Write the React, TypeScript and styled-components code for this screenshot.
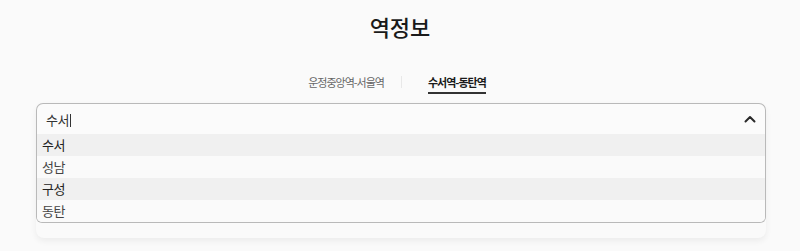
import React, { useState } from 'react';
import styled, { createGlobalStyle } from 'styled-components';

const GlobalStyle = createGlobalStyle`
  html, body {
    margin: 0;
    padding: 0;
    background: #fafafa;
    font-family: "Noto Sans CJK KR", "Noto Sans", sans-serif;
    color: #222;
  }
`;

const Page = styled.div`
  width: 800px;
  height: 251px;
  overflow: hidden;
  display: flex;
  flex-direction: column;
  align-items: center;
`;

const Title = styled.h1`
  margin: 10px 0 0;
  font-size: 22px;
  line-height: 32px;
  font-weight: 500;
  color: #1a1a1a;
`;

const Tabs = styled.div`
  display: flex;
  align-items: center;
  margin: 32px 6px 0 0;
`;

const Tab = styled.button<{ $active: boolean }>`
  border: 0;
  background: none;
  padding: 0 0 2px;
  font-family: inherit;
  font-size: 11px;
  letter-spacing: -1px;
  line-height: 16px;
  font-weight: ${p => (p.$active ? 700 : 400)};
  color: ${p => (p.$active ? '#1a1a1a' : '#666')};
  border-bottom: 2px solid ${p => (p.$active ? '#333' : 'transparent')};
  cursor: pointer;
`;

const Divider = styled.span`
  width: 1px;
  height: 12px;
  margin: 0 26px 4px 17px;
  background: #e8e8e8;
`;

const Content = styled.div`
  align-self: stretch;
  padding: 0 34px 0 36px;
  margin-top: 9px;
`;

const Card = styled.div`
  position: relative;
  height: 135px;
  border-radius: 8px;
  background: #fafafa;
  box-shadow: 0 3px 6px rgba(0, 0, 0, 0.06);
`;

const SelectBox = styled.div<{ $open: boolean }>`
  position: relative;
  display: flex;
  align-items: center;
  justify-content: space-between;
  height: 30px;
  padding: 0 9px;
  border: 1px solid #b9b9b9;
  border-bottom-color: ${p => (p.$open ? '#d4d4d4' : '#b9b9b9')};
  border-radius: ${p => (p.$open ? '7px 7px 0 0' : '7px')};
  background: #fbfbfb;
  font-size: 13px;
  letter-spacing: -0.5px;
  color: #333;
  cursor: pointer;
`;

const Caret = styled.span`
  display: inline-block;
  width: 1px;
  height: 13px;
  margin-left: 1px;
  background: #333;
  vertical-align: -2px;
`;

const Menu = styled.ul`
  position: absolute;
  top: 31px;
  left: 0;
  right: 0;
  margin: 0;
  padding: 0;
  list-style: none;
  border: 1px solid #b9b9b9;
  border-top: 0;
  border-radius: 0 0 6px 6px;
  background: #fafafa;
  overflow: hidden;
`;

const Option = styled.li<{ $shade: boolean }>`
  height: 22px;
  line-height: 22px;
  padding-left: 5px;
  font-size: 13px;
  letter-spacing: -0.5px;
  color: ${p => (p.$shade ? '#222' : '#444')};
  background: ${p => (p.$shade ? '#f0f0f0' : '#fafafa')};
`;

const Chevron = () => (
  <svg width="12" height="8" viewBox="0 0 12 8" fill="none">
    <path d="M1.5 6.5L6 2l4.5 4.5" stroke="#2a2a2a" strokeWidth="2" strokeLinecap="round" strokeLinejoin="round" />
  </svg>
);

const stations = ['수서', '성남', '구성', '동탄'];

export default function App() {
  const [tab, setTab] = useState(1);
  const [open, setOpen] = useState(true);

  return (
    <Page>
      <GlobalStyle />
      <Title>역정보</Title>
      <Tabs>
        <Tab $active={tab === 0} onClick={() => setTab(0)}>운정중앙역-서울역</Tab>
        <Divider />
        <Tab $active={tab === 1} onClick={() => setTab(1)}>수서역-동탄역</Tab>
      </Tabs>
      <Content>
        <Card>
          <SelectBox $open={open} onClick={() => setOpen(!open)}>
            <span>
              수서
              <Caret />
            </span>
            <Chevron />
          </SelectBox>
          {open && (
            <Menu>
              {stations.map((s, i) => (
                <Option key={s} $shade={i % 2 === 0}>{s}</Option>
              ))}
            </Menu>
          )}
        </Card>
      </Content>
    </Page>
  );
}
